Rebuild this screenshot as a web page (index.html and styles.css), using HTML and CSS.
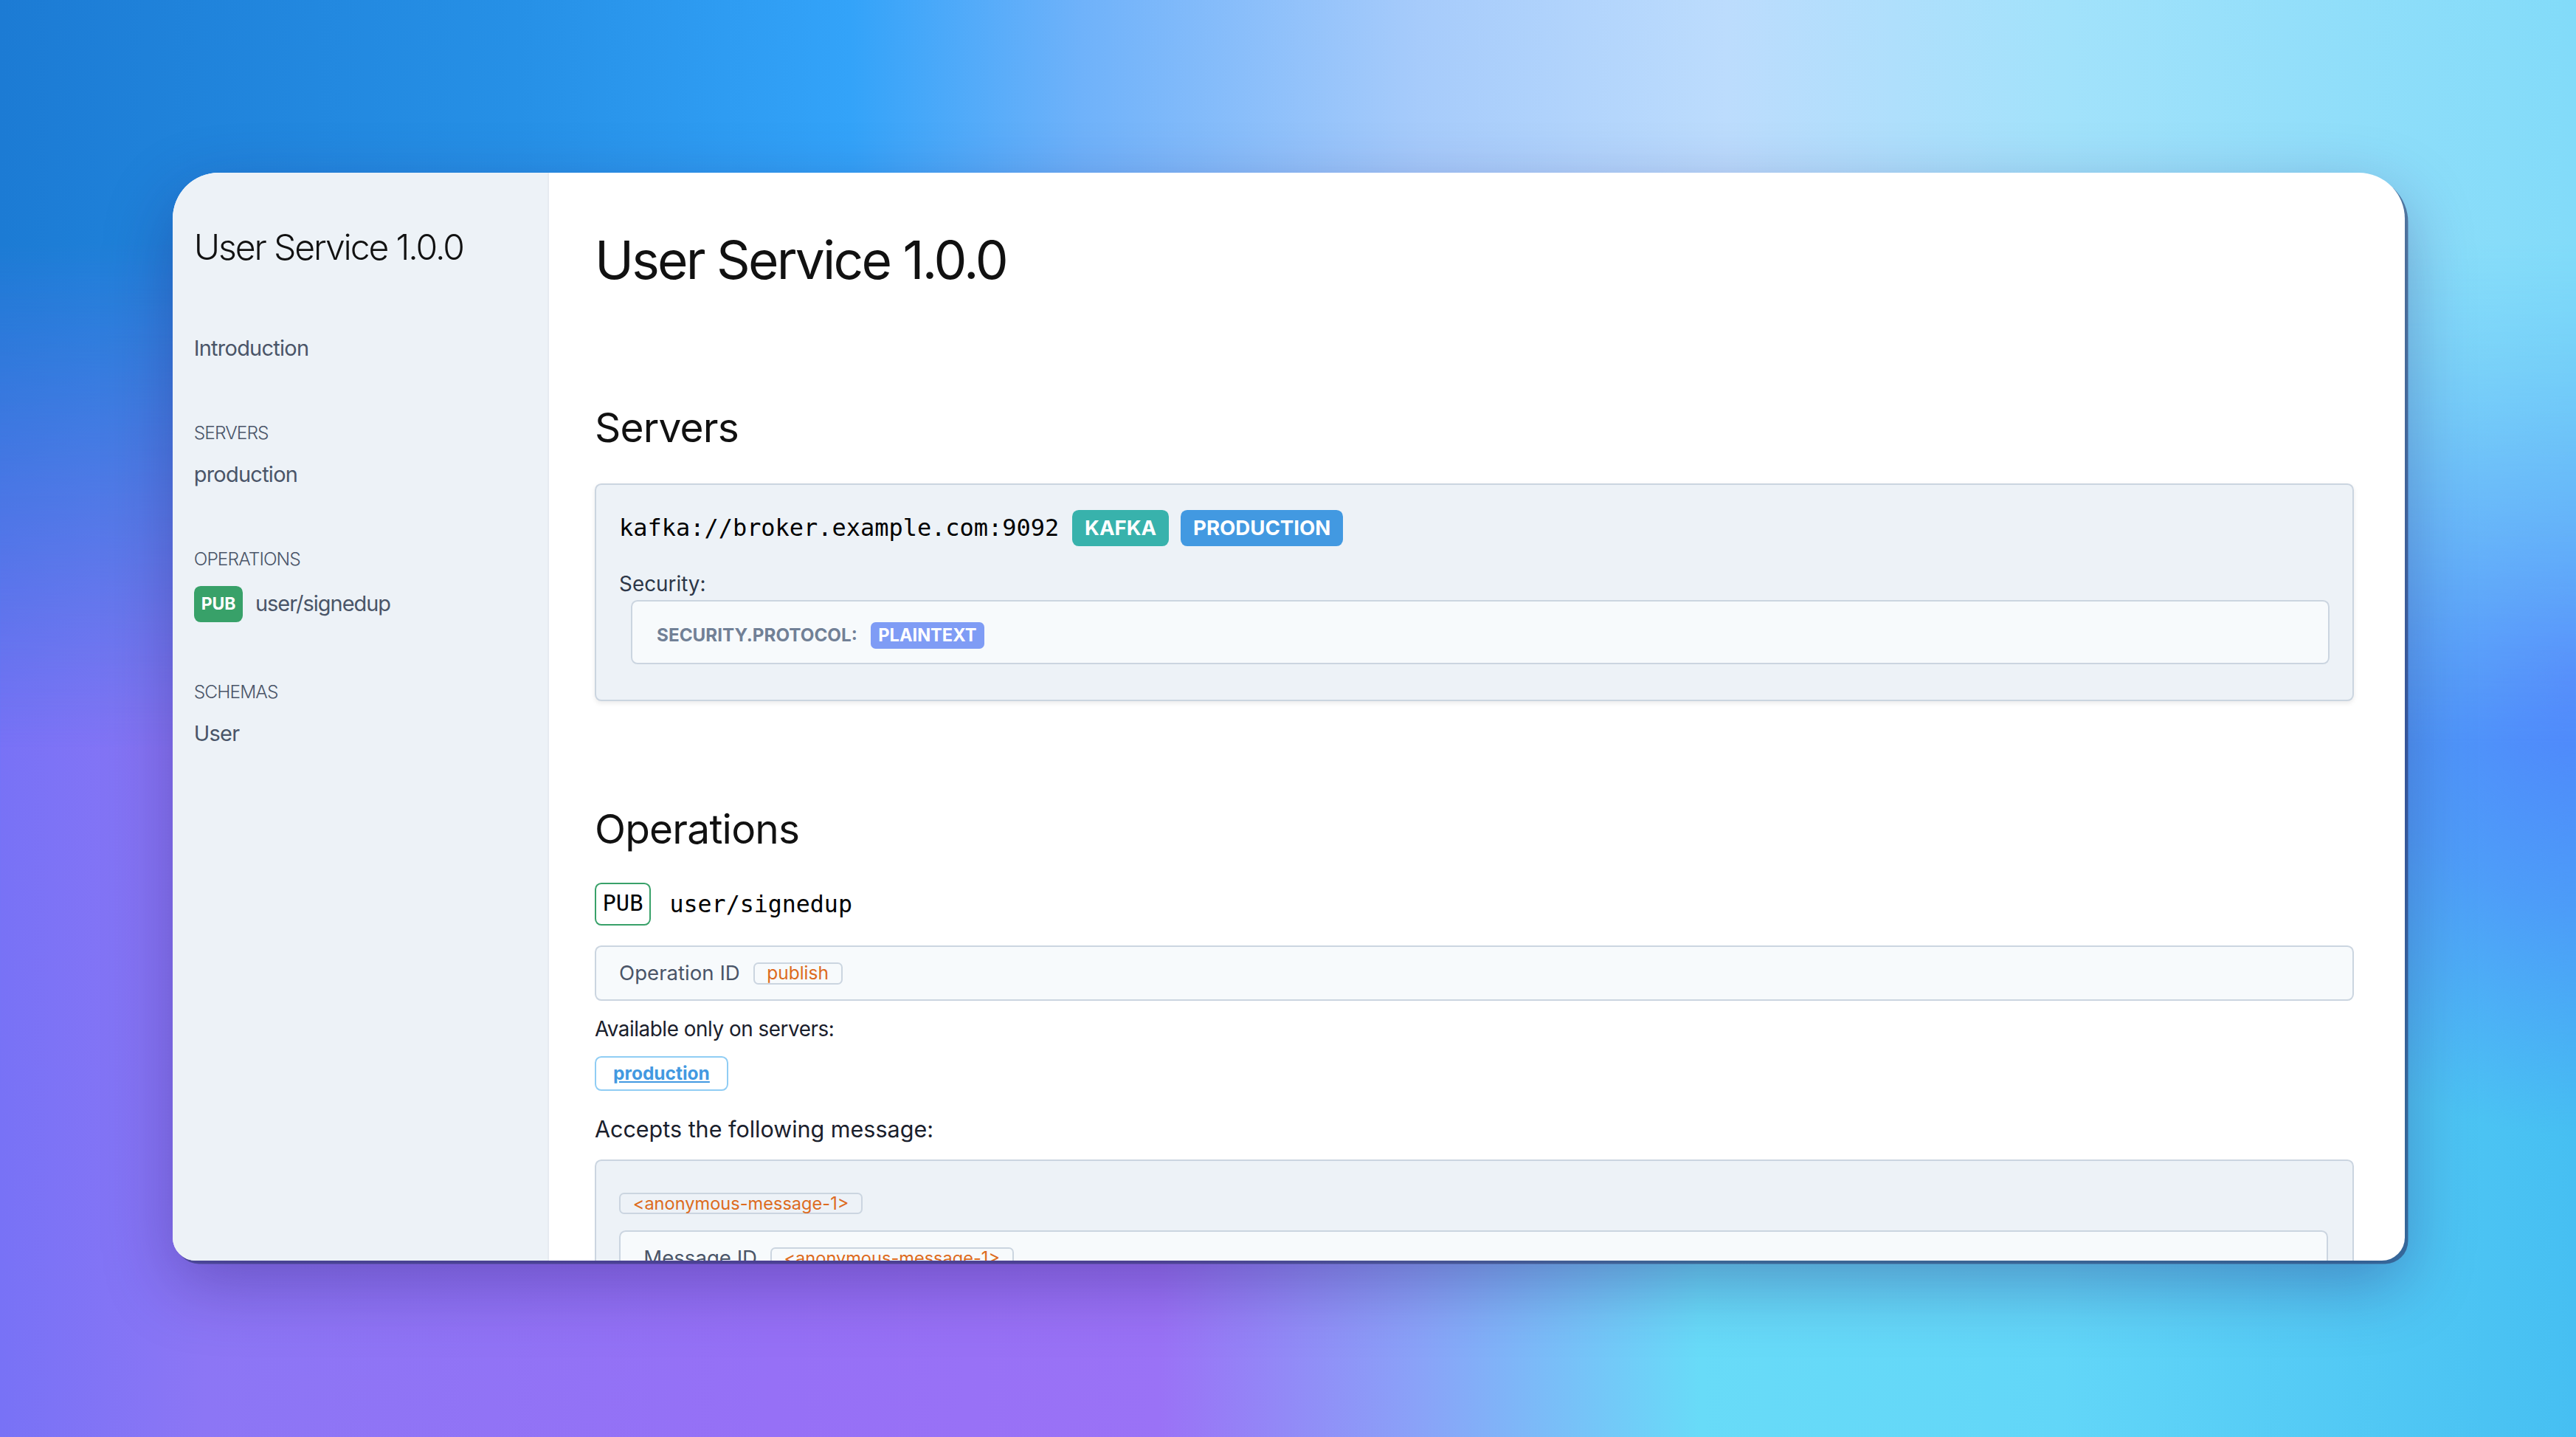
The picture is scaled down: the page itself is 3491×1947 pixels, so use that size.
FILE: index.html
```html
<!DOCTYPE html>
<html lang="en">
<head>
<meta charset="utf-8">
<title>User Service 1.0.0</title>
<link rel="stylesheet" href="styles.css">
</head>
<body>
<div class="stage">
  <div class="window">
    <aside class="sidebar">
      <div class="side-title">User Service 1.0.0</div>
      <nav class="side-nav">
        <a class="side-link" href="#introduction">Introduction</a>
        <div class="side-section">
          <div class="side-label">Servers</div>
          <a class="side-link" href="#server-production">production</a>
        </div>
        <div class="side-section">
          <div class="side-label">Operations</div>
          <a class="side-op" href="#operation-publish-user/signedup">
            <span class="pub-badge">PUB</span>
            <span class="side-op-name">user/signedup</span>
          </a>
        </div>
        <div class="side-section">
          <div class="side-label">Schemas</div>
          <a class="side-link" href="#schema-User">User</a>
        </div>
      </nav>
    </aside>
    <main class="content">
      <h1 class="title">User Service 1.0.0</h1>

      <h2 class="section-title servers-title">Servers</h2>
      <div class="server-card">
        <div class="server-head">
          <span class="url">kafka://broker.example.com:9092</span>
          <span class="badge badge-kafka">kafka</span>
          <span class="badge badge-prod">production</span>
        </div>
        <div class="security-label">Security:</div>
        <div class="security-box">
          <span class="sec-key">security.protocol:</span>
          <span class="sec-value">PLAINTEXT</span>
        </div>
      </div>

      <h2 class="section-title ops-title">Operations</h2>
      <div class="op-head">
        <span class="op-kind">PUB</span>
        <span class="op-channel">user/signedup</span>
      </div>
      <div class="field-box">
        <span class="field-label">Operation ID</span>
        <span class="tag">publish</span>
      </div>
      <p class="plain-text">Available only on servers:</p>
      <div class="server-links">
        <a class="server-link" href="#server-production">production</a>
      </div>
      <p class="accepts">Accepts the following message:</p>
      <div class="message-card">
        <div class="message-name"><span class="tag">&lt;anonymous-message-1&gt;</span></div>
        <div class="field-box message-inner">
          <span class="field-label">Message ID</span>
          <span class="tag">&lt;anonymous-message-1&gt;</span>
        </div>
      </div>
    </main>
  </div>
</div>
</body>
</html>
```
FILE: styles.css
```css
* { box-sizing: border-box; }

html, body {
  margin: 0;
  padding: 0;
}

body {
  overflow: hidden;
  background: #6f8ef3;
  font-family: "Inter", "Noto Sans", sans-serif;
}

.stage {
  zoom: 2.2264;
  position: relative;
  width: 1568px;
  height: 875px;
  overflow: hidden;
  padding: 105px 0 0 105px;
  background:
    radial-gradient(ellipse 16% 32% at 100% 47%, rgba(80, 132, 252, 1) 0%, rgba(80, 132, 252, 0.6) 50%, rgba(80, 132, 252, 0) 100%),
    linear-gradient(90deg, #7872f6 0%, #8c76f5 8%, #9670f6 30%, #9a72f6 45%, #8aa2f8 55%, #68dbf8 66%, #62d6f8 80%, #46bff2 100%);
}

.stage::before {
  content: "";
  position: absolute;
  inset: 0;
  background: linear-gradient(90deg, #1c7bd4 0%, #2690e6 20%, #33a3f9 33%, #6fb2fa 42%, #a6cbfb 55%, #bcdcfd 67%, #a2e2fb 80%, #82dbf9 100%);
  -webkit-mask-image: linear-gradient(180deg, #000 0%, #000 17%, rgba(0, 0, 0, 0) 52%);
  mask-image: linear-gradient(180deg, #000 0%, #000 17%, rgba(0, 0, 0, 0) 52%);
}

.window {
  position: relative;
  z-index: 1;
  display: flex;
  width: 1359px;
  height: 662px;
  border-radius: 28px 28px 14px 14px;
  overflow: hidden;
  background: #fff;
  box-shadow: 2px 2px 0 rgba(38, 48, 96, 0.55), 0 14px 40px rgba(40, 24, 110, 0.35);
}

/* ---------- sidebar ---------- */
.sidebar {
  flex: 0 0 229px;
  background: #edf2f7;
  border-right: 1px solid #e6ebf1;
  padding: 31.5px 13px 0;
}

.side-title {
  font-size: 21.6px;
  line-height: 28px;
  color: #111;
  font-weight: 300;
  letter-spacing: -0.95px;
}

.side-nav {
  margin-top: 38.3px;
}

.side-link {
  display: block;
  font-size: 13px;
  line-height: 18px;
  color: #4a5568;
  letter-spacing: -0.33px;
  text-decoration: none;
}

.side-section {
  margin-top: 35.7px;
}

.side-label {
  font-size: 11px;
  line-height: 14px;
  font-weight: 300;
  color: #4a5568;
  letter-spacing: -0.4px;
  text-transform: uppercase;
  margin-bottom: 9.3px;
}

.side-op {
  display: flex;
  align-items: center;
  gap: 7.4px;
  text-decoration: none;
}

.pub-badge {
  display: inline-block;
  width: 30px;
  height: 21.7px;
  line-height: 21.7px;
  text-align: center;
  background: #38a169;
  color: #fff;
  font-weight: 700;
  font-size: 10.3px;
  border-radius: 4px;
}

.side-op-name {
  font-size: 13px;
  line-height: 18px;
  color: #4a5568;
  letter-spacing: -0.45px;
}

/* ---------- content ---------- */
.content {
  flex: 1;
  padding: 33.4px 31px 0 28px;
  overflow: hidden;
}

.title {
  margin: 0;
  font-size: 32px;
  line-height: 40px;
  font-weight: 400;
  color: #111;
  letter-spacing: -1.25px;
}

.section-title {
  margin: 0;
  font-size: 24.7px;
  line-height: 32px;
  font-weight: 400;
  color: #111;
  letter-spacing: -0.35px;
}

.servers-title { margin-top: 66px; }
.ops-title { margin-top: 62.2px; }

.server-card {
  margin-top: 17.7px;
  background: #edf2f7;
  border: 1px solid #cbd5e0;
  border-radius: 4px;
  padding: 15.5px 14px 21.5px;
  box-shadow: 0 1px 3px rgba(0, 0, 0, 0.08);
}

.server-head {
  display: flex;
  align-items: center;
  height: 22px;
}

.url {
  font-family: "DejaVu Sans Mono", monospace;
  font-size: 14.35px;
  line-height: 22px;
  color: #000;
  margin-right: 8px;
}

.badge {
  height: 22px;
  line-height: 22px;
  padding: 0 7.7px;
  border-radius: 4px;
  color: #fff;
  font-weight: 700;
  font-size: 12.4px;
  text-transform: uppercase;
}

.badge-kafka {
  background: #38b2ac;
  margin-right: 7px;
}

.badge-prod { background: #4299e1; }

.security-label {
  margin-top: 13.8px;
  font-size: 12.5px;
  line-height: 18px;
  color: #2d3748;
}

.security-box {
  margin: 1px 0 0 7px;
  display: flex;
  align-items: center;
  gap: 8px;
  background: #f7fafc;
  border: 1px solid #cbd5e0;
  border-radius: 4px;
  padding: 12.5px 15px 8.5px;
}

.sec-key {
  font-size: 10.9px;
  line-height: 16px;
  font-weight: 700;
  color: #718096;
  text-transform: uppercase;
}

.sec-value {
  height: 16px;
  line-height: 16px;
  padding: 0 4.8px;
  border-radius: 3px;
  background: #7f9cf5;
  color: #fff;
  font-size: 10.6px;
  font-weight: 700;
}

.op-head {
  margin-top: 16.7px;
  display: flex;
  align-items: center;
  gap: 11.4px;
}

.op-kind {
  height: 25.8px;
  line-height: 23.8px;
  padding: 0 3.85px;
  border: 1px solid #38a169;
  border-radius: 4px;
  font-family: "DejaVu Sans Mono", monospace;
  font-size: 13.7px;
  color: #000;
}

.op-channel {
  font-family: "DejaVu Sans Mono", monospace;
  font-size: 14.2px;
  line-height: 20px;
  color: #000;
}

.field-box {
  margin-top: 12.3px;
  display: flex;
  align-items: center;
  gap: 8px;
  background: #f7fafc;
  border: 1px solid #cbd5e0;
  border-radius: 4px;
  padding: 8px 14px;
}

.field-label {
  font-size: 12.4px;
  line-height: 16px;
  color: #4a5568;
}

.tag {
  display: inline-block;
  font-size: 11px;
  line-height: 11.5px;
  padding: 0 7.5px;
  border: 1px solid #cbd5e0;
  border-radius: 3px;
  color: #dd6b20;
}

.message-card .tag {
  font-size: 10.6px;
}

.plain-text {
  margin: 8px 0 0;
  font-size: 12.5px;
  line-height: 18px;
  color: #1a202c;
  letter-spacing: -0.2px;
}

.server-links {
  margin-top: 7.5px;
  display: flex;
}

.server-link {
  border: 1px solid #90cdf4;
  border-radius: 4px;
  padding: 0 10.4px;
  line-height: 19.3px;
  font-size: 11px;
  font-weight: 700;
  color: #4299e1;
  text-decoration: underline;
}

.accepts {
  margin: 13.5px 0 0;
  font-size: 13.7px;
  line-height: 20px;
  color: #1a202c;
}

.message-card {
  margin-top: 8.4px;
  background: #edf2f7;
  border: 1px solid #cbd5e0;
  border-radius: 4px;
  padding: 19px 15px 14px 14px;
  height: 200px;
}

.message-name {
  display: flex;
}

.message-inner {
  margin-top: 9.8px;
}
```
